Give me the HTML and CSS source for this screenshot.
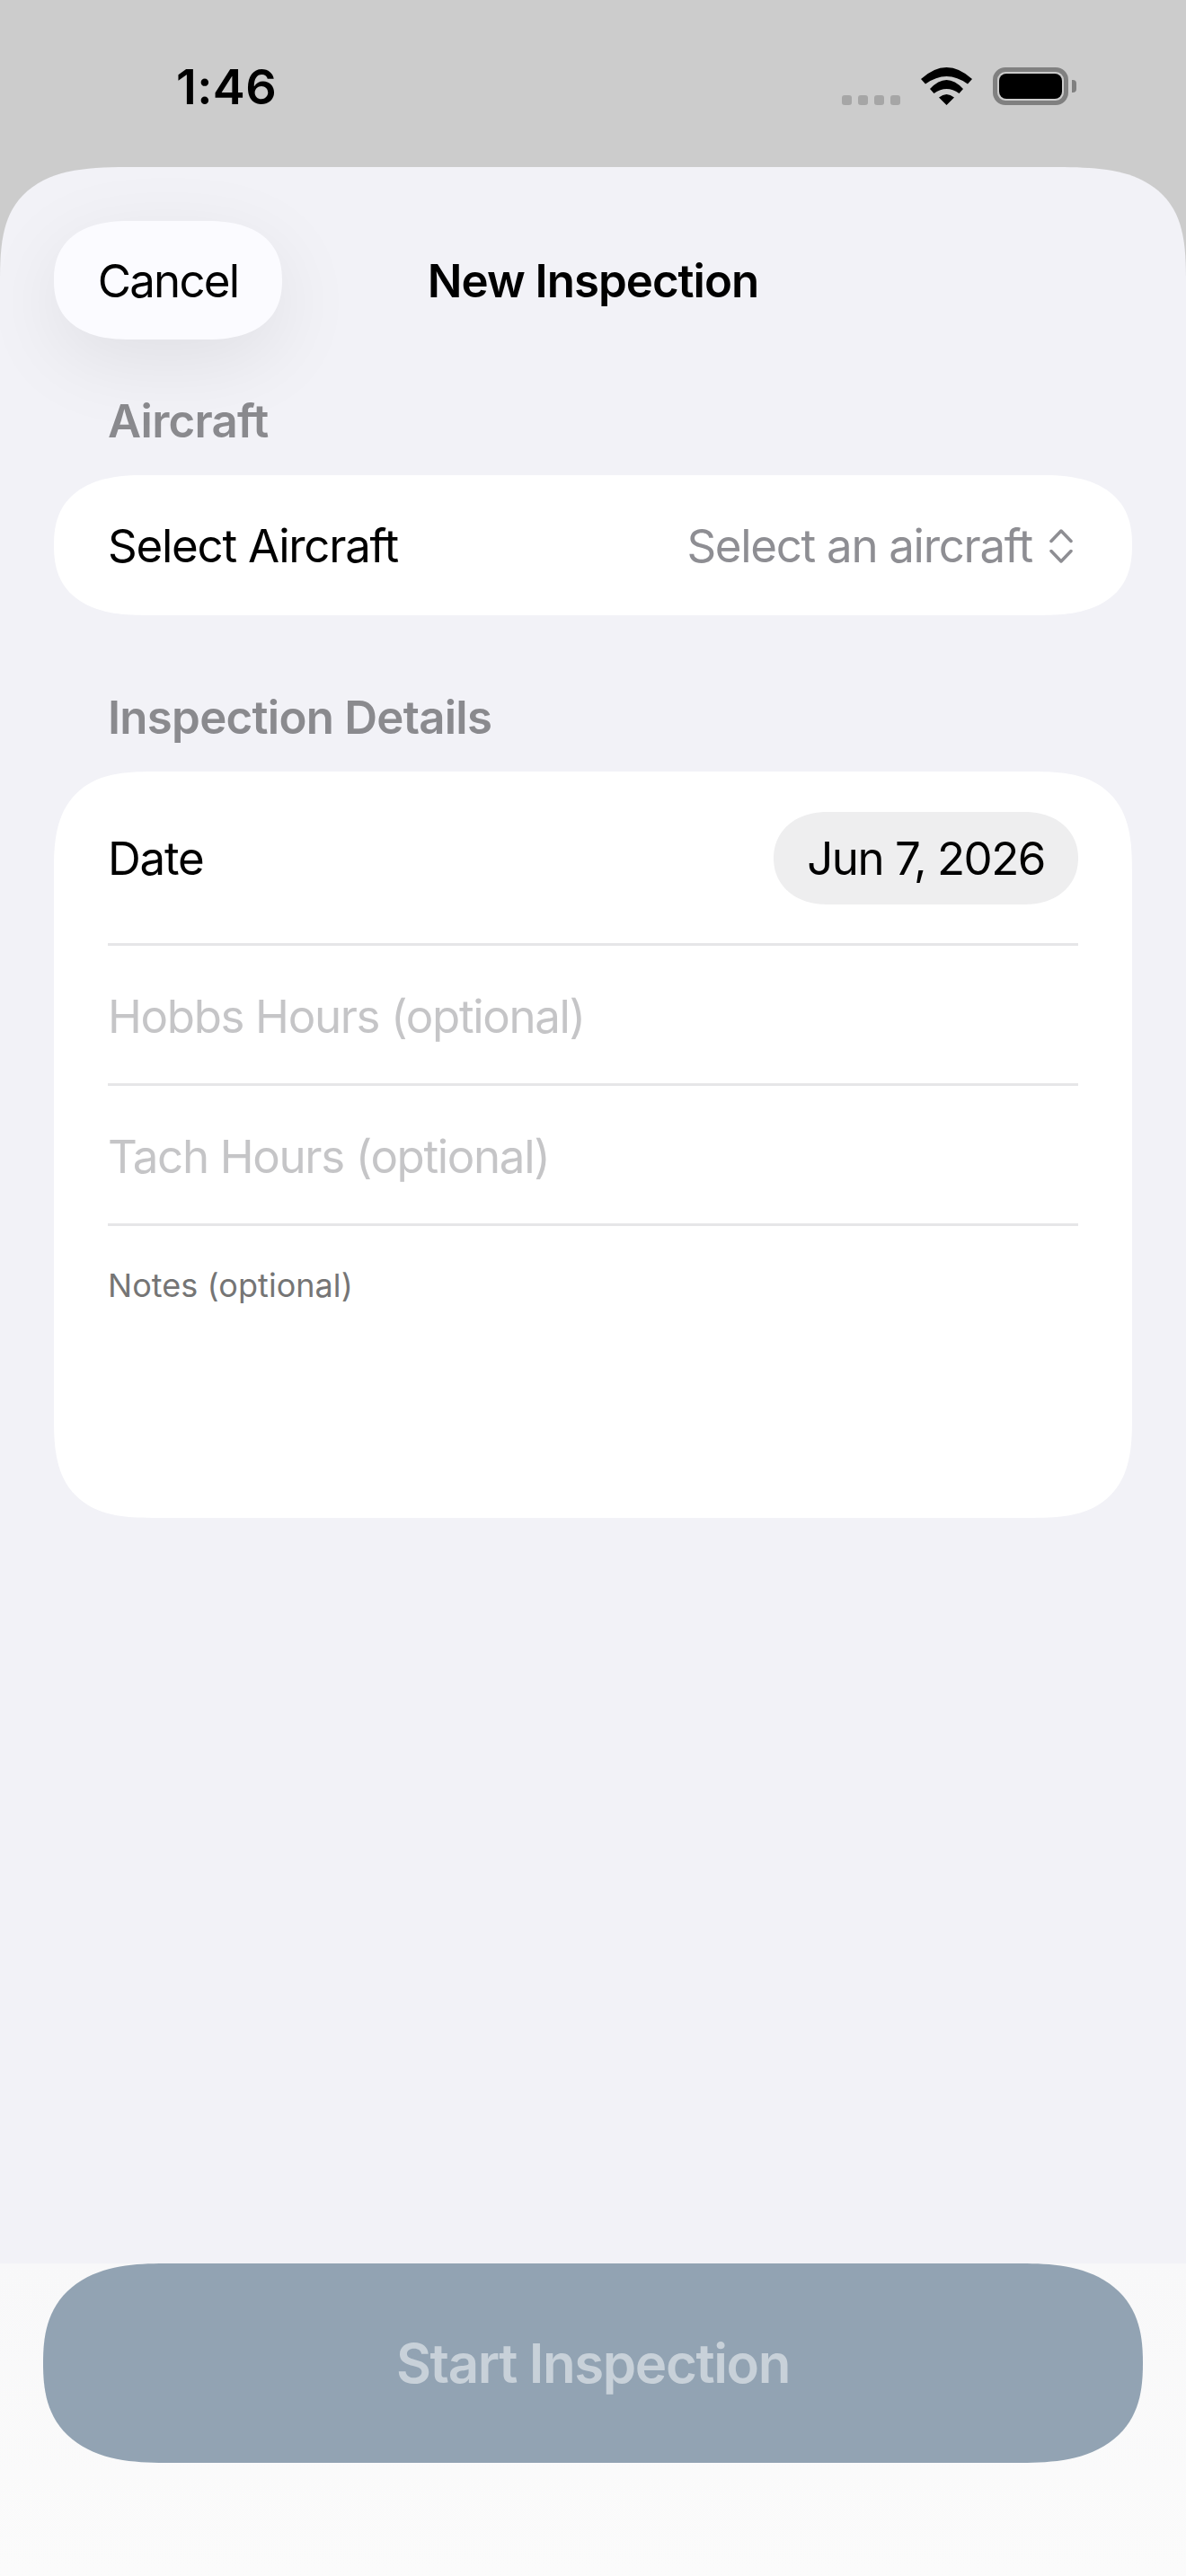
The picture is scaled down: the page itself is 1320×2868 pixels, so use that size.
FILE: index.html
```html
<!DOCTYPE html>
<html lang="en">
<head>
<meta charset="utf-8">
<title>New Inspection</title>
<link rel="stylesheet" href="styles.css">
</head>
<body>
<div class="screen">
  <header class="status">
    <span class="time">1:46</span>
    <div class="status-icons">
      <div class="signal"><i></i><i></i><i></i><i></i></div>
      <svg class="wifi" width="57" height="42" viewBox="0 0 57 42"><path d="M0 13 Q28.500 -13 57 13 L52 18.500 Q28.500 1.500 5 18.500 Z M10 24 Q28.500 4 47 24 L42.500 29 Q28.500 19 14.500 29 Z M20 33.500 Q28.500 26.500 37 33.500 L28.500 42 Z" fill="#000"/></svg>
      <div class="battery"><div class="battery-shell"><div class="battery-fill"></div></div><div class="battery-cap"></div></div>
    </div>
  </header>
  <main class="sheet">
    <div class="nav">
      <button class="cancel">Cancel</button>
      <h1 class="title">New Inspection</h1>
    </div>
    <h2 class="section-label label-first">Aircraft</h2>
    <section class="card card-single">
      <span class="row-label">Select Aircraft</span>
      <span class="picker">Select an aircraft
        <svg class="chevrons" width="26" height="38" viewBox="0 0 26 38" fill="none" stroke="#8e8e93" stroke-width="3.500" stroke-linecap="round" stroke-linejoin="round"><path d="M2 13.500 L13 2 L24 13.500"/><path d="M2 24.500 L13 36 L24 24.500"/></svg>
      </span>
    </section>
    <h2 class="section-label label-second">Inspection Details</h2>
    <section class="card card-details">
      <div class="row row-date">
        <span class="row-label">Date</span>
        <span class="date-pill">Jun 7, 2026</span>
      </div>
      <div class="row row-input"><span class="placeholder">Hobbs Hours (optional)</span></div>
      <div class="row row-input"><span class="placeholder">Tach Hours (optional)</span></div>
      <div class="notes">Notes (optional)</div>
    </section>
    <div class="spacer"></div>
    <footer class="footer">
      <button class="start">Start Inspection</button>
    </footer>
  </main>
</div>
</body>
</html>
```
FILE: styles.css
```css
* { box-sizing: border-box; }
html, body { margin: 0; padding: 0; }
body { width: 1320px; height: 2868px; overflow: hidden; background: #cccccc; font-family: Inter, "Liberation Sans", sans-serif; color: #000; }
.screen { width: 1320px; height: 2868px; display: flex; flex-direction: column; }
.status { height: 186px; flex: none; display: flex; justify-content: space-between; padding: 66px 122px 0 196px; }
.time { font-size: 54px; line-height: 62px; font-weight: 600; letter-spacing: 0.4px; }
.status-icons { display: flex; align-items: flex-end; height: 42px; margin-top: 9px; }
.signal { display: flex; gap: 7px; margin-right: 23px; }
.signal i { width: 11px; height: 11px; border-radius: 3px; background: #a6a6a6; }
.wifi { margin-right: 23px; display: block; }
.battery { display: flex; align-items: center; gap: 4px; }
.battery-shell { width: 84px; height: 42px; border: 5px solid #808080; border-radius: 14px; padding: 2px; }
.battery-fill { width: 100%; height: 100%; background: #000; border-radius: 8px; }
.battery-cap { width: 5px; height: 14px; background: #808080; border-radius: 0 4px 4px 0; }
.sheet { flex: 1; background: #f2f2f7; border-radius: 150px 150px 0 0 / 130px 130px 0 0; corner-shape: superellipse(1.6); display: flex; flex-direction: column; overflow: hidden; }
.nav { height: 192px; flex: none; position: relative; padding: 60px 60px 0; }
.cancel { width: 254px; height: 132px; border: 0; border-radius: 84px / 66px; corner-shape: superellipse(1.25); background: #fbfbff; box-shadow: 0 24px 90px rgba(0,0,0,0.08); font: 400 51px/134px Inter, sans-serif; letter-spacing: -1.8px; color: #000; padding: 0; display: block; }
.title { position: absolute; left: 0; right: 0; top: 61px; margin: 0; height: 132px; text-align: center; font-size: 51px; line-height: 132px; font-weight: 600; letter-spacing: -1px; pointer-events: none; }
.section-label { margin: 0; padding-left: 120px; font-size: 51px; line-height: 60px; font-weight: 600; color: #8a8a8e; letter-spacing: -0.75px; }
.label-first { margin-top: 61px; margin-bottom: 30px; }
.label-second { margin-top: 84px; margin-bottom: 30px; }
.card { margin: 0 60px; background: #fff; flex: none; }
.card-single { height: 156px; border-radius: 100px / 78px; corner-shape: superellipse(1.3); display: flex; justify-content: space-between; align-items: center; padding: 2px 60px 0; }
.row-label { font-size: 51px; line-height: 60px; letter-spacing: -1.25px; }
.picker { display: flex; align-items: center; gap: 19px; padding-right: 6px; font-size: 51px; line-height: 60px; letter-spacing: -1.3px; color: #8e8e93; }
.chevrons { display: block; }
.card-details { height: 831px; border-radius: 110px; corner-shape: superellipse(1.45); padding: 0 60px; display: flex; flex-direction: column; }
.row { display: flex; align-items: center; justify-content: space-between; border-bottom: 3px solid #e6e6e8; flex: none; }
.row-date { height: 194px; padding-top: 2px; }
.row-input { height: 156px; padding-top: 5px; }
.date-pill { height: 103px; padding: 0 37px; background: #eeeeef; border-radius: 60px / 51.500px; corner-shape: superellipse(1.1); font-size: 51px; line-height: 103px; letter-spacing: -1.5px; }
.placeholder { font-size: 51px; line-height: 60px; letter-spacing: -1.35px; color: #c5c5c7; }
.notes { margin-top: 44px; font-size: 36px; line-height: 44px; color: #757575; letter-spacing: 0.05px; }
.spacer { flex: 1; }
.footer { height: 348px; flex: none; background: linear-gradient(#f8f8f9, #fbfbfb); padding: 0 48px; }
.start { display: block; width: 100%; height: 222px; border: 0; border-radius: 135px / 111px; corner-shape: superellipse(1.35); background: #92a3b3; color: #c8d1d9; font: 600 60px/222px Inter, sans-serif; letter-spacing: -1.4px; padding: 0; }
```
